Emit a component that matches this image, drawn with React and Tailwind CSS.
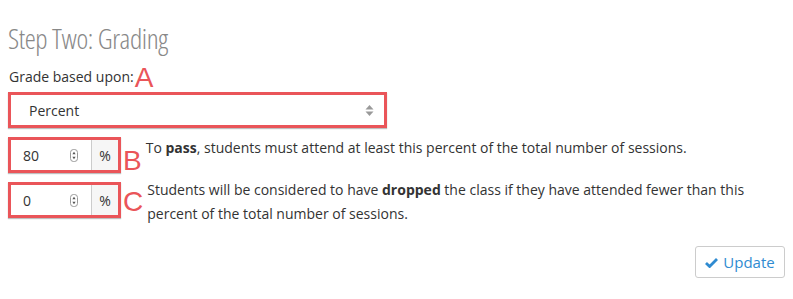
import { useState } from "react";

function Spinner() {
  return (
    <svg width="8" height="13" viewBox="0 0 8 13" className="shrink-0">
      <rect x="0.5" y="0.5" width="7" height="12" rx="3" fill="#fff" stroke="#999" />
      <path d="M4 2.8 L5.6 5.2 H2.4 Z" fill="#555" />
      <path d="M4 10.2 L5.6 7.8 H2.4 Z" fill="#555" />
    </svg>
  );
}

function PercentInput({ value }) {
  return (
    <div className="w-[113px] h-[36px] border-[3px] border-[#ea5559] shadow-[0_1px_1px_rgba(0,0,0,0.25)] flex bg-white">
      <div className="flex-1 flex items-center pl-[12px] pr-[13px] border-r border-[#ccc]">
        <span className="flex-1 text-[14px] text-[#333]">{value}</span>
        <Spinner />
      </div>
      <div className="w-[26px] flex items-center justify-center bg-[#f6f6f6] text-[14px] text-[#333]">%</div>
    </div>
  );
}

function Letter({ children, className }) {
  return (
    <span className={`font-['Liberation_Sans'] text-[28px] leading-none text-[#ea5559] ${className}`}>{children}</span>
  );
}

export default function App() {
  const [mode] = useState("Percent");

  return (
    <div className="w-[793px] h-[299px] bg-white px-[8px] pt-[22px] font-['Open_Sans',sans-serif] text-[#333]">
      <h2 className="text-[28px] leading-[32px] font-light text-[#888] tracking-[-0.4px] font-['Open_Sans',sans-serif] [font-stretch:condensed]">
        Step Two: Grading
      </h2>

      <div className="flex items-end mt-[11px] h-[22px] pl-[1px]">
        <span className="text-[14px] leading-[20px]">Grade based upon:</span>
        <Letter className="ml-[1px] relative top-[5px]">A</Letter>
      </div>

      <div className="mt-[5px] w-[379px] h-[36px] border-[3px] border-[#ea5559] shadow-[0_1px_1px_rgba(0,0,0,0.25)] bg-white flex items-center pl-[18px] pr-[10px]">
        <span className="flex-1 text-[14px]">{mode}</span>
        <svg width="9" height="13" viewBox="0 0 9 13">
          <path d="M4.5 1 L8.5 5.5 H0.5 Z" fill="#999" />
          <path d="M4.5 12 L8.5 7.5 H0.5 Z" fill="#999" />
        </svg>
      </div>

      <div className="flex items-start mt-[9px]">
        <PercentInput value="80" />
        <Letter className="ml-[2px] mt-[10px]">B</Letter>
        <p className="ml-[4px] mt-[-1px] text-[14px] leading-[24px]">
          To <b>pass</b>, students must attend at least this percent of the total number of sessions.
        </p>
      </div>

      <div className="flex items-start mt-[7px]">
        <PercentInput value="0" />
        <Letter className="ml-[2px] mt-[6px]">C</Letter>
        <p className="ml-[4px] -mt-[4px] w-[600px] text-[14px] leading-[24px]">
          Students will be considered to have <b>dropped</b> the class if they have attended fewer than this percent of the total number of sessions.
        </p>
      </div>

      <div className="flex justify-end mt-[20px]">
        <button className="w-[90px] h-[32px] border border-[#ccc] rounded-[3px] bg-white flex items-center justify-center gap-[5px] text-[15px] text-[#2f8bd1]">
          <svg width="13" height="11" viewBox="0 0 13 11">
            <path d="M1 6 L4.6 9.5 L12 2" stroke="#2f8bd1" strokeWidth="2.8" fill="none" />
          </svg>
          Update
        </button>
      </div>
    </div>
  );
}
